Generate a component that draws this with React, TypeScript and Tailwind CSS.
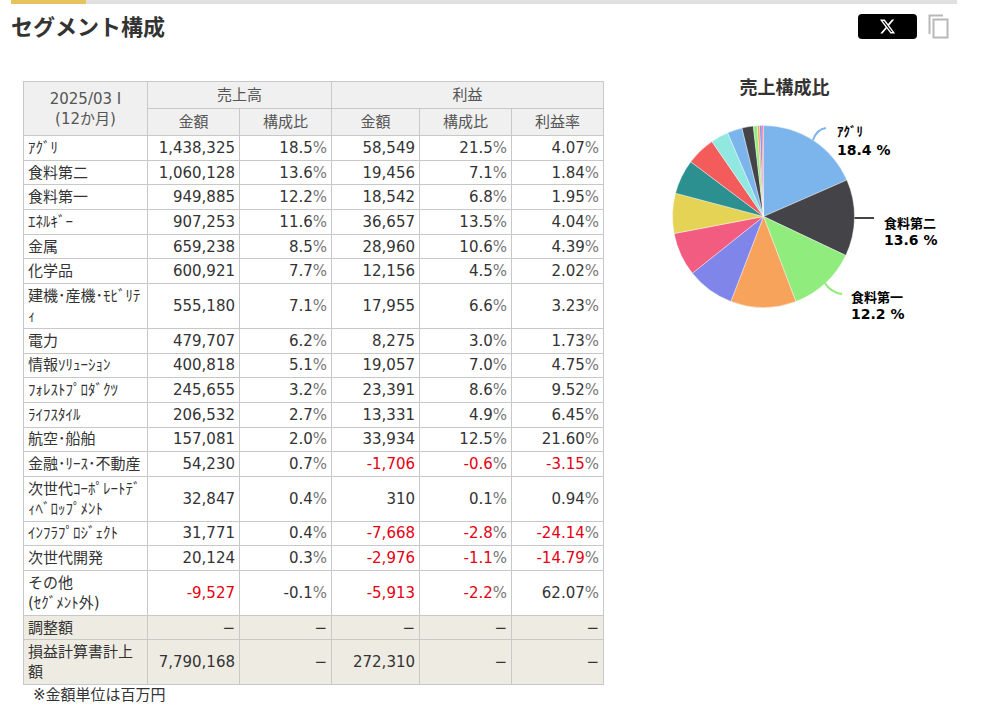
import React from 'react';

type Row = {
  label: string;
  cells: string[];
  total?: boolean;
};

const rows: Row[] = [
  { label: 'ｱｸﾞﾘ', cells: ['1,438,325', '18.5', '58,549', '21.5', '4.07'] },
  { label: '食料第二', cells: ['1,060,128', '13.6', '19,456', '7.1', '1.84'] },
  { label: '食料第一', cells: ['949,885', '12.2', '18,542', '6.8', '1.95'] },
  { label: 'ｴﾈﾙｷﾞｰ', cells: ['907,253', '11.6', '36,657', '13.5', '4.04'] },
  { label: '金属', cells: ['659,238', '8.5', '28,960', '10.6', '4.39'] },
  { label: '化学品', cells: ['600,921', '7.7', '12,156', '4.5', '2.02'] },
  { label: '建機･産機･ﾓﾋﾞﾘﾃ|ｨ', cells: ['555,180', '7.1', '17,955', '6.6', '3.23'] },
  { label: '電力', cells: ['479,707', '6.2', '8,275', '3.0', '1.73'] },
  { label: '情報ｿﾘｭｰｼｮﾝ', cells: ['400,818', '5.1', '19,057', '7.0', '4.75'] },
  { label: 'ﾌｫﾚｽﾄﾌﾟﾛﾀﾞｸﾂ', cells: ['245,655', '3.2', '23,391', '8.6', '9.52'] },
  { label: 'ﾗｲﾌｽﾀｲﾙ', cells: ['206,532', '2.7', '13,331', '4.9', '6.45'] },
  { label: '航空･船舶', cells: ['157,081', '2.0', '33,934', '12.5', '21.60'] },
  { label: '金融･ﾘｰｽ･不動産', cells: ['54,230', '0.7', '-1,706', '-0.6', '-3.15'] },
  { label: '次世代ｺｰﾎﾟﾚｰﾄﾃﾞ|ｨﾍﾞﾛｯﾌﾟﾒﾝﾄ', cells: ['32,847', '0.4', '310', '0.1', '0.94'] },
  { label: 'ｲﾝﾌﾗﾌﾟﾛｼﾞｪｸﾄ', cells: ['31,771', '0.4', '-7,668', '-2.8', '-24.14'] },
  { label: '次世代開発', cells: ['20,124', '0.3', '-2,976', '-1.1', '-14.79'] },
  { label: 'その他|(ｾｸﾞﾒﾝﾄ外)', cells: ['-9,527', '-0.1', '-5,913', '-2.2', '62.07'] },
  { label: '調整額', cells: ['−', '−', '−', '−', '−'], total: true },
  { label: '損益計算書計上|額', cells: ['7,790,168', '−', '272,310', '−', '−'], total: true },
];

// highcharts default palette
const palette = ['#7cb5ec', '#434348', '#90ed7d', '#f7a35c', '#8085e9', '#f15c80', '#e4d354', '#2b908f', '#f45b5b', '#91e8e1'];

const Cell = ({ value, col }: { value: string; col: number }) => {
  const isPct = col !== 0 && col !== 2 && value !== '−';
  const neg = value.startsWith('-') && col !== 1;
  return (
    <td className="border border-[#c8c8c8] px-[4px] py-[1.85px] text-right leading-[20px]">
      <span className={neg ? 'text-[#e60012]' : 'text-[#333]'}>{value}</span>
      {isPct && <span className="text-[#777]">%</span>}
    </td>
  );
};

const PieChart = () => {
  const values = rows
    .slice(0, 16)
    .map((r) => parseInt(r.cells[0].replace(/,/g, ''), 10));
  const total = values.reduce((a, b) => a + b, 0);
  const cx = 129.5;
  const cy = 116.5;
  const r = 91;
  let acc = 0;
  const slices = values.map((v, i) => {
    const a0 = (acc / total) * Math.PI * 2 - Math.PI / 2;
    acc += v;
    const a1 = (acc / total) * Math.PI * 2 - Math.PI / 2;
    const x0 = cx + r * Math.cos(a0);
    const y0 = cy + r * Math.sin(a0);
    const x1 = cx + r * Math.cos(a1);
    const y1 = cy + r * Math.sin(a1);
    const large = a1 - a0 > Math.PI ? 1 : 0;
    return (
      <path
        key={i}
        d={`M${cx} ${cy} L${x0} ${y0} A${r} ${r} 0 ${large} 1 ${x1} ${y1} Z`}
        fill={palette[i % palette.length]}
        stroke="#ffffff"
        strokeWidth={0.4}
      />
    );
  });

  return (
    <div className="w-[301px] ml-[30px] mt-[-5px]">
      <div className="h-[24px] text-center text-[18px] font-bold leading-[24px] text-[#333]">売上構成比</div>
      <svg width={320} height={240} className="overflow-visible">
        {slices}
        <path d="M179 40 Q183 29 192 28" fill="none" stroke="#7cb5ec" strokeWidth={2} />
        <path d="M220.5 118 L240 118" fill="none" stroke="#434348" strokeWidth={2} />
        <path d="M191 183 Q196 192 208 194" fill="none" stroke="#90ed7d" strokeWidth={2} />
        <g fontWeight={700} fill="#000">
          <text x={203} y={36} fontSize={13}>ｱｸﾞﾘ</text>
          <text x={203} y={55} fontSize={14}>18.4 %</text>
          <text x={250} y={128} fontSize={13}>食料第二</text>
          <text x={250} y={145} fontSize={14}>13.6 %</text>
          <text x={217} y={202} fontSize={13}>食料第一</text>
          <text x={217} y={219} fontSize={14}>12.2 %</text>
        </g>
      </svg>
    </div>
  );
};

export default function App() {
  return (
    <div
      className="min-h-screen bg-white text-[#333]"
      style={{ fontFamily: '"DejaVu Sans", "Noto Sans CJK JP", sans-serif' }}
    >
      <div className="w-[946px] ml-[11px]">
        {/* top rule */}
        <div className="flex h-[4px]">
          <div className="w-[75px] bg-[#e6c35c]" />
          <div className="flex-1 bg-[#e0e0e0]" />
        </div>

        <div className="flex h-[42px] items-center justify-between pr-[8px]">
          <h2
            className="text-[22px] font-bold leading-[30px] text-[#333]"
            style={{ fontFamily: '"Noto Sans CJK JP", sans-serif' }}
          >
            セグメント構成
          </h2>
          <div className="flex items-center gap-[11px] mt-[3px]">
            <button className="flex h-[25px] w-[59px] items-center justify-center rounded-[4px] bg-black">
              <svg viewBox="0 0 24 24" width={17} height={17} fill="#fff">
                <path d="M18.244 2.25h3.308l-7.227 8.26 8.502 11.24H16.17l-5.214-6.817L4.99 21.75H1.68l7.73-8.835L1.254 2.25H8.08l4.713 6.231zm-1.161 17.52h1.833L7.084 4.126H5.117z" />
              </svg>
            </button>
            <svg width={21} height={25} viewBox="0 0 21 25" fill="none" stroke="#b8b8b8" strokeWidth={2}>
              <path d="M1.5 20V1.5H15" />
              <rect x={5.5} y={5.5} width={14} height={18} />
            </svg>
          </div>
        </div>

        <div className="flex items-start mt-[35px]">
          <div className="ml-[12px]">
            <table className="w-[580px] table-fixed border-collapse text-[15px]">
              <colgroup>
                <col className="w-[124px]" />
                <col className="w-[92px]" />
                <col className="w-[92px]" />
                <col className="w-[88px]" />
                <col className="w-[92px]" />
                <col className="w-[92px]" />
              </colgroup>
              <thead>
                <tr className="bg-[#f0f0f0] text-[#555]">
                  <th rowSpan={2} className="border border-[#c8c8c8] font-normal leading-[20px] py-[3px]">
                    2025/03 I
                    <br />
                    (12か月)
                  </th>
                  <th colSpan={2} className="border border-[#c8c8c8] font-normal leading-[20px] py-[3px]">
                    売上高
                  </th>
                  <th colSpan={3} className="border border-[#c8c8c8] font-normal leading-[20px] py-[3px]">
                    利益
                  </th>
                </tr>
                <tr className="bg-[#f0f0f0] text-[#555]">
                  {['金額', '構成比', '金額', '構成比', '利益率'].map((h, i) => (
                    <th key={i} className="border border-[#c8c8c8] font-normal leading-[20px] py-[3px]">
                      {h}
                    </th>
                  ))}
                </tr>
              </thead>
              <tbody>
                {rows.map((row, i) => (
                  <tr key={i} className={row.total ? 'bg-[#eeebe2]' : 'bg-white'}>
                    <td className="border border-[#c8c8c8] px-[4px] py-[1.85px] text-left leading-[20px] whitespace-nowrap overflow-hidden">
                      {row.label.split('|').map((part, j) => (
                        <React.Fragment key={j}>
                          {j > 0 && <br />}
                          {part}
                        </React.Fragment>
                      ))}
                    </td>
                    {row.cells.map((c, j) => (
                      <Cell key={j} value={c} col={j} />
                    ))}
                  </tr>
                ))}
              </tbody>
            </table>
            <div className="pl-[10px] text-[15px] leading-[20px] text-[#333]">※金額単位は百万円</div>
          </div>

          <PieChart />
        </div>
      </div>
    </div>
  );
}
